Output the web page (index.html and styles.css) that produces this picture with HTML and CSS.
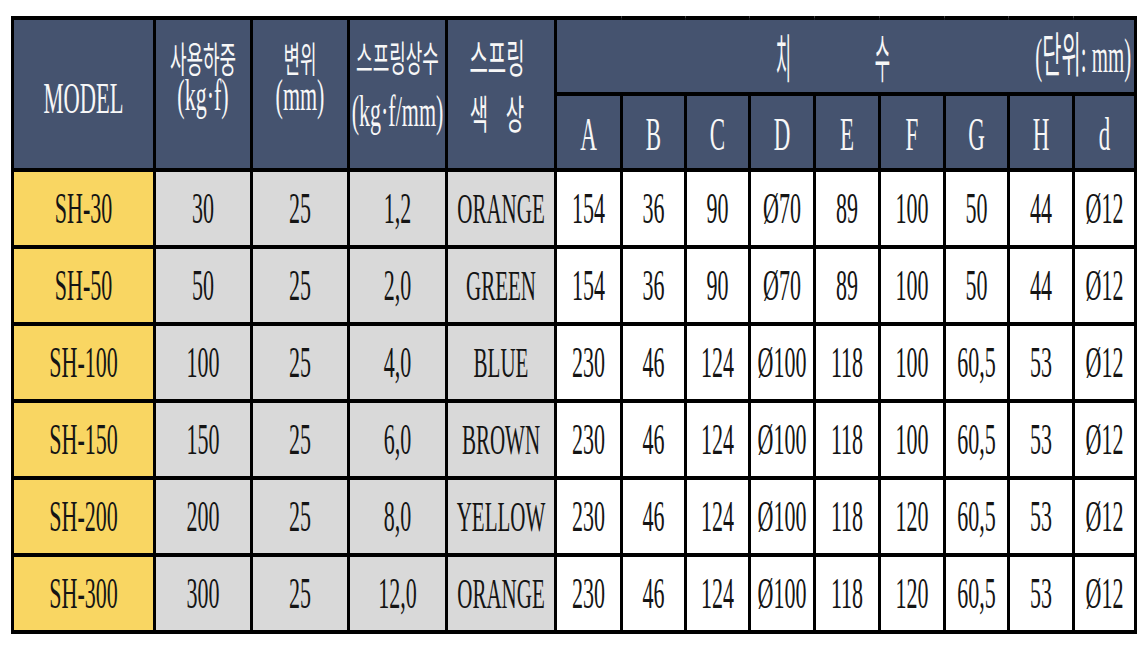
FILE: index.html
```html
<!DOCTYPE html>
<html lang="ko">
<head>
<meta charset="utf-8">
<title>SH 스프링 사양</title>
<link rel="stylesheet" href="styles.css">
</head>
<body>
<div class="sheet">
<table class="spec">
  <colgroup>
    <col class="w-model"><col class="w-load"><col class="w-disp"><col class="w-const"><col class="w-color">
    <col class="w-a"><col class="w-b"><col class="w-c"><col class="w-d"><col class="w-e"><col class="w-f"><col class="w-g"><col class="w-h"><col class="w-dd">
  </colgroup>
  <thead>
    <tr class="hr1">
      <th rowspan="2" class="model-h">MODEL</th>
      <th rowspan="2" class="two"><div class="stack s1"><span class="ko">사용하중</span><span class="la l2">(kg·f)</span></div></th>
      <th rowspan="2" class="two"><div class="stack s1"><span class="ko">변위</span><span class="la l2">(mm)</span></div></th>
      <th rowspan="2" class="two"><div class="stack s2"><span class="ko">스프링상수</span><span class="la l2">(kg·f/mm)</span></div></th>
      <th rowspan="2" class="two color-h"><div class="stack s2"><span class="ko big">스프링</span><span class="ko big spaced l2">색 상</span></div></th>
      <th colspan="9" class="dim"><div class="dimrow"><span class="jisu"><span class="cg">치</span><span class="cg">수</span></span><span class="unit"><span class="ug">(단위: mm)</span></span></div></th>
    </tr>
    <tr class="hr2">
      <th class="let">A</th><th class="let">B</th><th class="let">C</th><th class="let">D</th><th class="let">E</th><th class="let">F</th><th class="let">G</th><th class="let">H</th><th class="let">d</th>
    </tr>
  </thead>
  <tbody>
    <tr><td class="m">SH-30</td><td class="g">30</td><td class="g">25</td><td class="g">1,2</td><td class="g nm">ORANGE</td><td>154</td><td>36</td><td>90</td><td>Ø70</td><td>89</td><td>100</td><td>50</td><td>44</td><td>Ø12</td></tr>
    <tr><td class="m">SH-50</td><td class="g">50</td><td class="g">25</td><td class="g">2,0</td><td class="g nm">GREEN</td><td>154</td><td>36</td><td>90</td><td>Ø70</td><td>89</td><td>100</td><td>50</td><td>44</td><td>Ø12</td></tr>
    <tr><td class="m">SH-100</td><td class="g">100</td><td class="g">25</td><td class="g">4,0</td><td class="g nm">BLUE</td><td>230</td><td>46</td><td>124</td><td>Ø100</td><td>118</td><td>100</td><td>60,5</td><td>53</td><td>Ø12</td></tr>
    <tr><td class="m">SH-150</td><td class="g">150</td><td class="g">25</td><td class="g">6,0</td><td class="g nm">BROWN</td><td>230</td><td>46</td><td>124</td><td>Ø100</td><td>118</td><td>100</td><td>60,5</td><td>53</td><td>Ø12</td></tr>
    <tr><td class="m">SH-200</td><td class="g">200</td><td class="g">25</td><td class="g">8,0</td><td class="g nm">YELLOW</td><td>230</td><td>46</td><td>124</td><td>Ø100</td><td>118</td><td>120</td><td>60,5</td><td>53</td><td>Ø12</td></tr>
    <tr><td class="m">SH-300</td><td class="g">300</td><td class="g">25</td><td class="g">12,0</td><td class="g nm">ORANGE</td><td>230</td><td>46</td><td>124</td><td>Ø100</td><td>118</td><td>120</td><td>60,5</td><td>53</td><td>Ø12</td></tr>
  </tbody>
</table>
</div>
</body>
</html>
```

FILE: styles.css
```css
html, body {
  margin: 0;
  padding: 0;
  background: #ffffff;
  overflow: hidden;
}

.sheet {
  padding: 16px 0 0 11px;
}

/* The table is laid out at double width and condensed horizontally,
   matching the tall, narrow lettering of the original sheet. */
.spec {
  border-collapse: collapse;
  table-layout: fixed;
  width: 2246px;
  transform: scaleX(0.5);
  transform-origin: 0 0;
  font-family: "Liberation Serif", "Noto Sans CJK KR", serif;
  color: #141414;
}

.w-model { width: 284px; }
.w-load  { width: 194px; }
.w-disp  { width: 194px; }
.w-const { width: 196px; }
.w-color { width: 218px; }
.w-a  { width: 132px; }
.w-b  { width: 128px; }
.w-c  { width: 128px; }
.w-d  { width: 130px; }
.w-e  { width: 130px; }
.w-f  { width: 130px; }
.w-g  { width: 128px; }
.w-h  { width: 130px; }
.w-dd { width: 124px; }

.spec th,
.spec td {
  border-style: solid;
  border-color: #000;
  border-width: 4px 6px;
  padding: 0;
  text-align: center;
  vertical-align: middle;
  white-space: nowrap;
}

.spec th {
  background: #45536f;
  color: #f7f7f7;
  font-weight: normal;
}

.hr1 { height: 76px; }
.hr2 { height: 76px; }
.spec tbody tr { height: 77px; }

/* header cells */
.spec th.model-h {
  font-size: 45px;
  line-height: 44px;
  padding-top: 8px;
}

.spec th.two { vertical-align: top; }
.spec th.color-h { padding-right: 16px; }

.stack {
  display: flex;
  flex-direction: column;
  align-items: center;
}
.stack .ko {
  font-family: "Noto Sans CJK KR", sans-serif;
  font-size: 36px;
  line-height: 40px;
}
.stack .la { font-size: 44px; }
.stack .big { font-size: 40px; }
.stack .spaced { word-spacing: 24px; }

.s1 { padding-top: 17px; }
.s1 .la { line-height: 38px; }

.s2 { padding-top: 16px; }
.s2 .la { line-height: 40px; }
.s2 .l2 { margin-top: 16px; }

.spec th.dim { padding: 0 6px 0 0; }
.dimrow {
  display: grid;
  grid-template-columns: 1fr auto 1fr;
  align-items: center;
}
.jisu {
  grid-column: 2;
  display: inline-flex;
  gap: 150px;
  margin-right: 44px;
  font-family: "Noto Sans CJK KR", sans-serif;
  font-size: 52px;
  line-height: 54px;
}
.cg {
  display: inline-block;
  transform: scaleX(0.64);
}
.unit {
  grid-column: 3;
  justify-self: end;
  font-size: 48px;
  line-height: 54px;
}
.ug {
  display: inline-block;
  transform: scaleX(0.87);
  transform-origin: 100% 50%;
}

.spec th.let {
  font-size: 46px;
  line-height: 46px;
  padding-top: 6px;
}

/* body cells */
.spec td {
  font-size: 44px;
  line-height: 44px;
  background: #ffffff;
}
.spec td.m { background: #f9d662; }
.spec td.g { background: #d9d9d9; }
.spec td.nm { font-size: 42px; }
```
